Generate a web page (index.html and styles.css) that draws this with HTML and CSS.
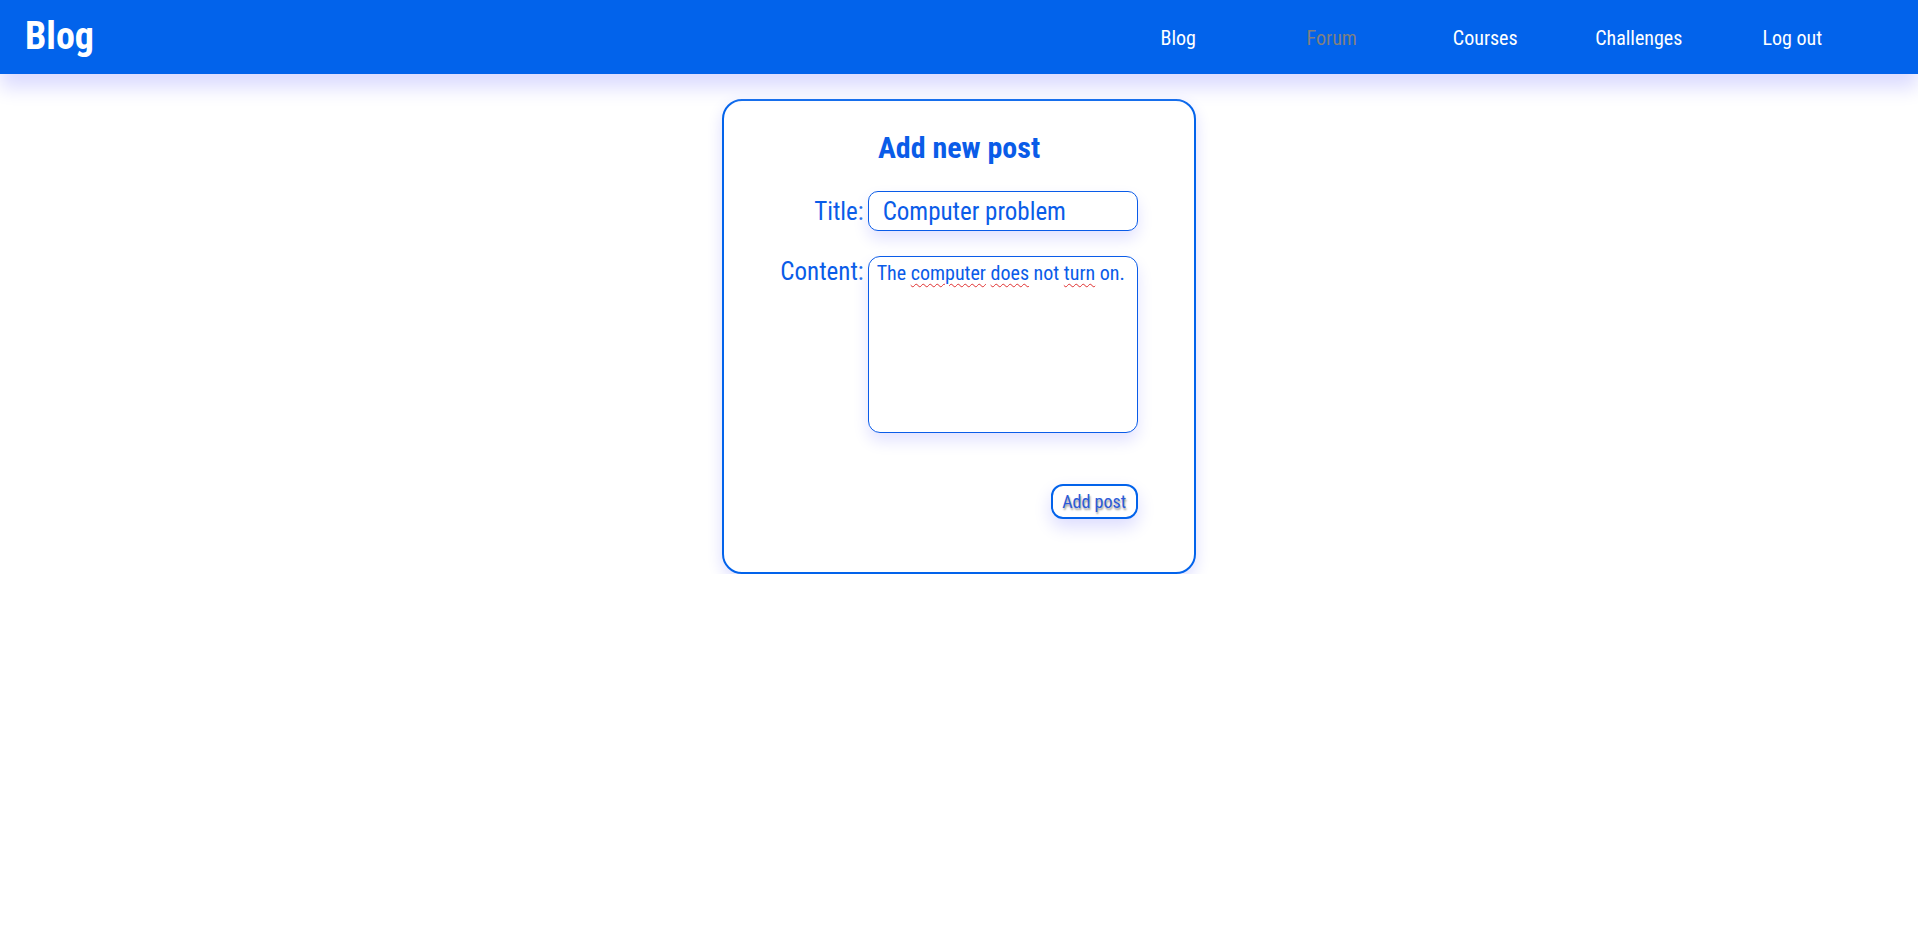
FILE: index.html
```html
<!DOCTYPE html>
<html lang="en">
<head>
<meta charset="utf-8">
<title>Blog - Add new post</title>
<link rel="stylesheet" href="styles.css">
</head>
<body>
<header class="topbar">
  <a class="logo" href="#">Blog</a>
  <nav class="nav">
    <a class="nav-item" href="#">Blog</a>
    <a class="nav-item nav-item--active" href="#">Forum</a>
    <a class="nav-item" href="#">Courses</a>
    <a class="nav-item" href="#">Challenges</a>
    <a class="nav-item" href="#">Log out</a>
  </nav>
</header>
<main class="page">
  <section class="card">
    <h1 class="card-title">Add new post</h1>
    <form class="post-form">
      <label class="form-label form-label--title" for="title">Title:</label>
      <input class="title-input" id="title" type="text" value="Computer problem">
      <label class="form-label form-label--content" for="content">Content:</label>
      <div class="content-input" id="content" role="textbox" aria-multiline="true" contenteditable="true">The <span class="typo">computer</span> <span class="typo">does</span> not <span class="typo">turn</span> on.</div>
      <button class="submit-btn" type="button">Add post</button>
    </form>
  </section>
</main>
</body>
</html>
```
FILE: styles.css
```css
* { box-sizing: border-box; }
html, body {
  margin: 0;
  padding: 0;
  background: #ffffff;
  font-family: "Roboto Condensed", Roboto, "Liberation Sans", sans-serif;
  font-stretch: condensed;
}
.topbar {
  height: 74px;
  background: #0263eb;
  display: flex;
  align-items: center;
  justify-content: space-between;
  padding-left: 25px;
  padding-right: 49px;
  box-shadow: 0 14px 18px #dcdcff;
  position: relative;
  z-index: 1;
}
.logo {
  color: #ffffff;
  font-weight: 700;
  font-size: 38px;
  text-decoration: none;
  line-height: 1;
  margin-top: -2px;
}
.nav { display: flex; }
.nav-item {
  width: 153.5px;
  text-align: center;
  color: #ffffff;
  font-size: 20px;
  text-decoration: none;
  line-height: 24px;
  margin-top: 2px;
}
.nav-item--active { color: #808080; }
.page {
  display: flex;
  justify-content: center;
  padding-top: 25px;
}
.card {
  width: 474px;
  border: 2px solid #0263eb;
  border-radius: 20px;
  background: #fff;
  box-shadow: 0 6px 16px #dcdcff;
  padding: 29px 0 53px;
}
.card-title {
  margin: 0 0 25px;
  text-align: center;
  color: #0a5ce8;
  font-size: 30px;
  line-height: 36px;
  font-weight: 700;
}
.post-form {
  display: grid;
  grid-template-columns: auto 270px;
  column-gap: 4px;
  row-gap: 25px;
  justify-content: center;
}
.form-label {
  color: #0a5ce8;
  font-size: 25px;
  line-height: 30px;
  text-align: right;
}
.form-label--title { align-self: center; padding-top: 2px; }
.form-label--content { align-self: start; padding-top: 1px; }
.title-input {
  width: 270px;
  height: 40px;
  border: 1px solid #0a5ce8;
  border-radius: 10px;
  padding: 0 14px;
  font-family: inherit;
  font-stretch: condensed;
  font-size: 25px;
  color: #0a5ce8;
  background: #fff;
  box-shadow: 0 8px 16px #e2e2ff;
  outline: none;
}
.content-input {
  width: 270px;
  height: 177px;
  border: 1px solid #0a5ce8;
  border-radius: 12px;
  padding: 4px 8px;
  font-size: 20px;
  line-height: 24px;
  color: #0a5ce8;
  background: #fff;
  box-shadow: 0 8px 16px #e2e2ff;
  outline: none;
  white-space: nowrap;
  overflow: hidden;
}
.typo {
  text-decoration: underline wavy #e03030;
  text-decoration-thickness: 1px;
  text-underline-offset: 3px;
}
.submit-btn {
  grid-column: 2;
  justify-self: end;
  margin-top: 26px;
  width: 87px;
  height: 35px;
  border: 2px solid #0263eb;
  border-radius: 12px;
  background: #fff;
  color: #2a5ad8;
  font-family: inherit;
  font-stretch: condensed;
  font-size: 18px;
  padding: 0;
  text-shadow: 1px 2px 2px #9a9a9a;
  box-shadow: 0 8px 18px #dcdcff;
  cursor: pointer;
}
```
